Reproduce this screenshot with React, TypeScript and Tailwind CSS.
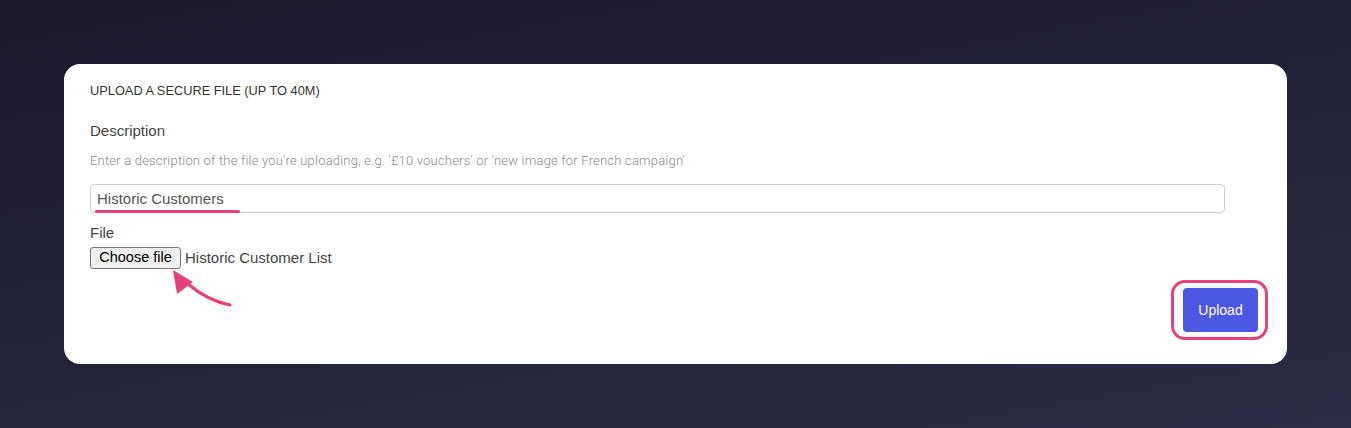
import React from "react";

export default function App() {
  return (
    <div
      className="w-[1351px] h-[428px] overflow-hidden pt-[64px] pl-[64px]"
      style={{ background: "linear-gradient(170deg, #1b1a2d 0%, #222238 50%, #2d2d45 100%)" }}
    >
      <div className="relative w-[1223px] h-[300px] bg-white rounded-[16px] pl-[26px] pr-[62px] pt-[20px] font-['Liberation_Sans',Arial,sans-serif]">
        <div className="text-[12.8px] leading-[14px] text-[#333]">UPLOAD A SECURE FILE (UP TO 40M)</div>
        <div className="mt-[24px] text-[15px] leading-[18px] text-[#444]">Description</div>
        <div className="mt-[13px] text-[13px] leading-[16px] tracking-[0.2px] text-[#8a8a8a] font-['Roboto',sans-serif] font-light">
          Enter a description of the file you're uploading, e.g. '£10 vouchers' or 'new image for French campaign'
        </div>
        <div className="mt-[15px] h-[29px] w-full border border-[#cfcfcf] rounded-[4px] pl-[6px] flex items-center">
          <span className="relative text-[15px] leading-[17px] text-[#555]">
            Historic Customers
            <span className="absolute left-[-2px] right-[-16px] top-[20px] h-[3px] bg-[#e5427a] rounded-full"></span>
          </span>
        </div>
        <div className="mt-[11px] text-[15px] leading-[18px] text-[#444]">File</div>
        <div className="mt-[5px] flex items-center gap-[4px]">
          <span className="h-[22px] w-[91px] flex items-center justify-center border border-[#777] rounded-[3px] bg-[#efefef] text-[14.5px] text-black">
            Choose file
          </span>
          <span className="text-[15px] text-[#444]">Historic Customer List</span>
        </div>
        <svg className="absolute left-[96px] top-[198px]" width="80" height="55" viewBox="0 0 80 55">
          <path d="M70 43 C55 40 42 34 28 22" fill="none" stroke="#e5427a" strokeWidth="3.2" strokeLinecap="round" />
          <polygon points="13,8 33,20 17,32" fill="#e5427a" />
        </svg>
        <div className="absolute right-[19px] bottom-[24px] rounded-[14px] border-[3px] border-[#e5427a] pl-[9px] pr-[7px] py-[5px]">
          <button className="w-[75px] h-[44px] rounded-[4px] bg-[#4c58e4] text-white text-[14px]">Upload</button>
        </div>
      </div>
    </div>
  );
}
